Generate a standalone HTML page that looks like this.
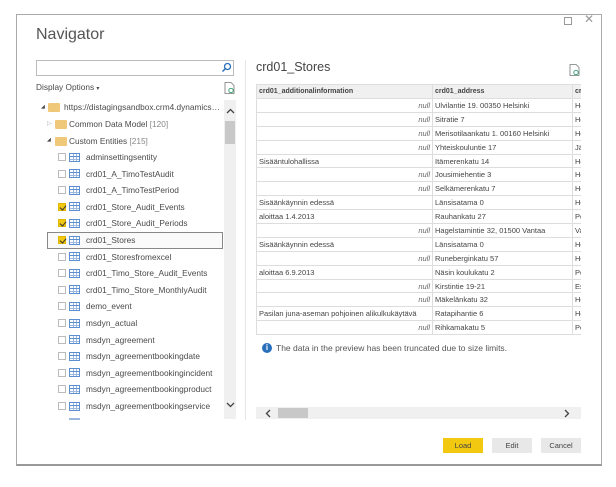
<!DOCTYPE html>
<html><head><meta charset="utf-8"><style>
*{margin:0;padding:0;box-sizing:border-box}
body{width:616px;height:487px;background:#fff;font-family:"Liberation Sans",sans-serif;position:relative;overflow:hidden;color:#333}
.a{position:absolute}
.win{left:16px;top:14px;width:586px;height:452px;border:1px solid #aaa;border-bottom:2px solid #999;background:#fff}
.t{font-size:8.3px;color:#4a4a4a;white-space:nowrap}
.cb{width:8px;height:8px;border:1px solid #bbb;background:#fff}
.cb.on{background:#f2c811;border-color:#e0b800}
.cb.on:after{content:"";position:absolute;left:1.5px;top:0px;width:3px;height:5px;border:solid #333;border-width:0 1.2px 1.2px 0;transform:rotate(40deg)}
.ti{width:11px;height:9px;border:1px solid #5b8fd0;background:
linear-gradient(#5b8fd0,#5b8fd0) 0 2px/100% 1px no-repeat,
linear-gradient(#9bb8e0,#9bb8e0) 0 5px/100% 1px no-repeat,
linear-gradient(90deg,transparent 3px,#9bb8e0 3px,#9bb8e0 4px,transparent 4px,transparent 6px,#9bb8e0 6px,#9bb8e0 7px,transparent 7px) #fff}
.fo{width:12px;height:9px;background:#f0c87a;border-radius:1px}
table{border-collapse:collapse;font-size:7.5px;color:#444;table-layout:fixed}
td{border:1px solid #ddd;height:13.9px;padding:0 2px;white-space:nowrap;overflow:hidden}
th{background:#f0f0f0;border:1px solid #ddd;height:14px;text-align:left;padding:0 2px;font-weight:bold;font-size:7px;white-space:nowrap;overflow:hidden}
td.n{text-align:right;font-style:italic;color:#666}
.btn{height:15px;width:40px;font-size:7.5px;text-align:center;line-height:15px;color:#444;background:#e8e8e8}
</style></head><body>
<div class="a win"></div>
<div class="a" style="left:564px;top:17px;width:8px;height:8px;border:1px solid #999"></div>
<div class="a" style="left:584px;top:12px;font-size:12px;color:#999">✕</div>
<div class="a" style="left:36px;top:26px;font-size:16px;color:#555">Navigator</div>
<div class="a" style="left:36px;top:60px;width:198px;height:16px;border:1px solid #bbb"></div>
<svg class="a" style="left:221px;top:62px" width="11" height="11"><circle cx="6.5" cy="4.5" r="3" fill="none" stroke="#2a6fba" stroke-width="1.3"/><line x1="4.5" y1="6.5" x2="1.5" y2="9.5" stroke="#2a6fba" stroke-width="1.5"/></svg>
<div class="a t" style="left:36px;top:82px">Display Options <span style="font-size:6px">▾</span></div>
<svg class="a" style="left:224px;top:82px" width="11" height="12"><path d="M1 .5h6l3 3v8H1z" fill="#fff" stroke="#777" stroke-width=".8"/><circle cx="7" cy="8.5" r="2.2" fill="none" stroke="#2a9d6a" stroke-width=".9"/></svg>
<svg class="a" style="left:569px;top:64px" width="11" height="12"><path d="M1 .5h6l3 3v8H1z" fill="#fff" stroke="#777" stroke-width=".8"/><circle cx="7" cy="8.5" r="2.2" fill="none" stroke="#2a9d6a" stroke-width=".9"/></svg>
<!-- tree -->
<div class="a" style="left:41px;top:104px;font-size:5px;color:#444">◢</div><div class="a fo" style="left:48px;top:103px"></div><div class="a t" style="left:64px;top:102px;width:158px;overflow:hidden;text-overflow:ellipsis">https://distagingsandbox.crm4.dynamics.co...</div>
<div class="a" style="left:47px;top:120px;font-size:6px;color:#aaa">▷</div><div class="a fo" style="left:55px;top:120px"></div><div class="a t" style="left:69px;top:119px">Common Data Model <span style="color:#888">[120]</span></div>
<div class="a" style="left:47px;top:137px;font-size:5px;color:#444">◢</div><div class="a fo" style="left:55px;top:137px"></div><div class="a t" style="left:69px;top:136px">Custom Entities <span style="color:#888">[215]</span></div>
<div class="a" style="left:47px;top:232px;width:176px;height:17px;border:1px solid #888;background:#fafafa"></div>
<div id="tree"></div>
<div class="a" style="left:224px;top:100px;width:12px;height:319px;background:#f0f0f0"></div>
<div class="a" style="left:225px;top:121px;width:10px;height:23px;background:#c8c8c8"></div>
<svg class="a" style="left:226px;top:108px" width="9" height="6"><path d="M1 5L4.5 1.5L8 5" fill="none" stroke="#444" stroke-width="1.3"/></svg>
<svg class="a" style="left:226px;top:402px" width="9" height="6"><path d="M1 1L4.5 4.5L8 1" fill="none" stroke="#444" stroke-width="1.3"/></svg>
<div class="a" style="left:245px;top:60px;width:1px;height:360px;background:#e6e6e6"></div>
<div class="a" style="left:256px;top:60px;font-size:12.5px;color:#444">crd01_Stores</div>
<div class="a" style="left:256px;top:84px;width:325px;height:322px;overflow:hidden">
<table style="width:340px"><colgroup><col style="width:176px"><col style="width:140px"><col style="width:24px"></colgroup>
<tr><th>crd01_additionalinformation</th><th>crd01_address</th><th>cr</th></tr>
<tr><td class="n">null</td><td>Ulvilantie 19. 00350 Helsinki</td><td>He</td></tr>
<tr><td class="n">null</td><td>Sitratie 7</td><td>He</td></tr>
<tr><td class="n">null</td><td>Merisotilaankatu 1. 00160 Helsinki</td><td>He</td></tr>
<tr><td class="n">null</td><td>Yhteiskouluntie 17</td><td>Jä</td></tr>
<tr><td>Sisääntulohallissa</td><td>Itämerenkatu 14</td><td>He</td></tr>
<tr><td class="n">null</td><td>Jousimiehentie 3</td><td>He</td></tr>
<tr><td class="n">null</td><td>Selkämerenkatu 7</td><td>He</td></tr>
<tr><td>Sisäänkäynnin edessä</td><td>Länsisatama 0</td><td>He</td></tr>
<tr><td>aloittaa 1.4.2013</td><td>Rauhankatu 27</td><td>Po</td></tr>
<tr><td class="n">null</td><td>Hagelstamintie 32, 01500 Vantaa</td><td>Va</td></tr>
<tr><td>Sisäänkäynnin edessä</td><td>Länsisatama 0</td><td>He</td></tr>
<tr><td class="n">null</td><td>Runeberginkatu 57</td><td>He</td></tr>
<tr><td>aloittaa 6.9.2013</td><td>Näsin koulukatu 2</td><td>Po</td></tr>
<tr><td class="n">null</td><td>Kirstintie 19-21</td><td>Es</td></tr>
<tr><td class="n">null</td><td>Mäkelänkatu 32</td><td>He</td></tr>
<tr><td>Pasilan juna-aseman pohjoinen alikulkukäytävä</td><td>Ratapihantie 6</td><td>He</td></tr>
<tr><td class="n">null</td><td>Rihkamakatu 5</td><td>Po</td></tr>
</table></div>
<div class="a" style="left:262px;top:343px;width:10px;height:10px;border-radius:50%;background:#2a6fba;color:#fff;font-size:8px;font-weight:bold;text-align:center;line-height:10px">i</div>
<div class="a" style="left:276px;top:343px;font-size:8.5px;color:#555">The data in the preview has been truncated due to size limits.</div>
<div class="a" style="left:256px;top:407px;width:325px;height:12px;background:#f0f0f0"></div>
<div class="a" style="left:278px;top:408px;width:30px;height:10px;background:#c8c8c8"></div>
<svg class="a" style="left:265px;top:409px" width="6" height="9"><path d="M5 1L1.5 4.5L5 8" fill="none" stroke="#444" stroke-width="1.3"/></svg>
<svg class="a" style="left:564px;top:409px" width="6" height="9"><path d="M1 1L4.5 4.5L1 8" fill="none" stroke="#444" stroke-width="1.3"/></svg>
<div class="a btn" style="left:443px;top:438px;background:#f2c811">Load</div>
<div class="a btn" style="left:492px;top:438px">Edit</div>
<div class="a btn" style="left:541px;top:438px">Cancel</div>
<script>
var items=[["adminsettingsentity",0],["crd01_A_TimoTestAudit",0],["crd01_A_TimoTestPeriod",0],["crd01_Store_Audit_Events",1],["crd01_Store_Audit_Periods",1],["crd01_Stores",1],["crd01_Storesfromexcel",0],["crd01_Timo_Store_Audit_Events",0],["crd01_Timo_Store_MonthlyAudit",0],["demo_event",0],["msdyn_actual",0],["msdyn_agreement",0],["msdyn_agreementbookingdate",0],["msdyn_agreementbookingincident",0],["msdyn_agreementbookingproduct",0],["msdyn_agreementbookingservice",0]];
var h="";items.forEach(function(it,i){var y=157+i*16.6;
h+='<div class="a cb'+(it[1]?' on':'')+'" style="left:58px;top:'+(y-4)+'px"></div><div class="a ti" style="left:69px;top:'+(y-4.5)+'px"></div><div class="a t" style="left:86px;top:'+(y-5)+'px">'+it[0]+'</div>';});
h+='<div class="a" style="left:69px;top:418px;width:11px;height:2px;background:#9bb8e0"></div>';
document.getElementById("tree").innerHTML=h;
</script>
</body></html>
